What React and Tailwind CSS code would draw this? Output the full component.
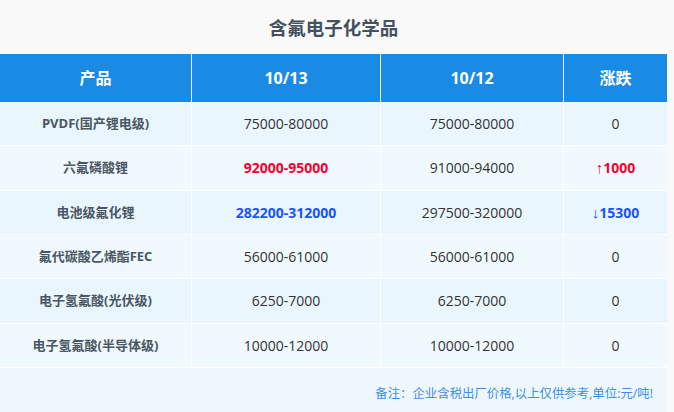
import React from 'react';

const rows = [
  { name: 'PVDF(国产锂电级)', today: '75000-80000', prev: '75000-80000', change: '0', tone: 'flat' },
  { name: '六氟磷酸锂', today: '92000-95000', prev: '91000-94000', change: '1000', arrow: '↑', tone: 'up' },
  { name: '电池级氟化锂', today: '282200-312000', prev: '297500-320000', change: '15300', arrow: '↓', tone: 'down' },
  { name: '氟代碳酸乙烯酯FEC', today: '56000-61000', prev: '56000-61000', change: '0', tone: 'flat' },
  { name: '电子氢氟酸(光伏级)', today: '6250-7000', prev: '6250-7000', change: '0', tone: 'flat' },
  { name: '电子氢氟酸(半导体级)', today: '10000-12000', prev: '10000-12000', change: '0', tone: 'flat' },
];

const toneClass = {
  flat: 'text-[#333333] font-normal',
  up: 'text-[#f5002f] font-bold',
  down: 'text-[#1a53ff] font-bold',
};

export default function App() {
  return (
    <div
      className="w-[674px] h-[412px] bg-[#f9f9f9] overflow-hidden"
      style={{ fontFamily: '"Open Sans", "Noto Sans CJK SC", sans-serif' }}
    >
      <div className="w-[667px]">
        <div className="h-[54px] flex items-center justify-center pt-[2px]">
          <h1 className="text-[18.5px] font-bold text-[#44525f]">含氟电子化学品</h1>
        </div>

        <div className="flex h-[48px] bg-[#1a8be5] text-white font-bold text-[16px]">
          <div className="w-[192px] flex items-center justify-center border-r border-white">产品</div>
          <div className="w-[189px] flex items-center justify-center border-r border-white">10/13</div>
          <div className="w-[183px] flex items-center justify-center border-r border-white">10/12</div>
          <div className="flex-1 flex items-center justify-center">涨跌</div>
        </div>

        {rows.map((r, i) => (
          <div
            key={r.name}
            className={`flex h-[44.33px] border-b border-white ${i % 2 === 0 ? 'bg-[#eaf6fe]' : 'bg-[#f0f9fe]'}`}
          >
            <div className="w-[192px] flex items-center justify-center border-r border-white font-bold text-[13px] text-[#4a5663]">
              {r.name}
            </div>
            <div className={`w-[189px] flex items-center justify-center border-r border-white text-[14px] ${toneClass[r.tone]}`}>
              {r.today}
            </div>
            <div className="w-[183px] flex items-center justify-center border-r border-white text-[14px] text-[#333333]">
              {r.prev}
            </div>
            <div className={`flex-1 flex items-center justify-center text-[14px] ${toneClass[r.tone]}`}>
              {r.arrow && (
                <span className="text-[15px] leading-none" style={{ fontFamily: '"Liberation Sans", sans-serif' }}>
                  {r.arrow}
                </span>
              )}
              {r.change}
            </div>
          </div>
        ))}

        <div className="h-[46px] bg-[#eef7fe] flex items-center justify-end pr-[14px] pt-[6px]">
          <p className="text-[12.4px] text-[#3b8fe6]">备注：企业含税出厂价格,以上仅供参考,单位:元/吨!</p>
        </div>
      </div>
    </div>
  );
}
